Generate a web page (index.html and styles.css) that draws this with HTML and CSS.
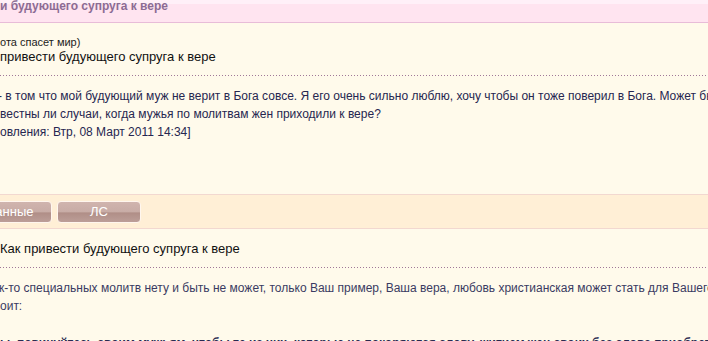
FILE: index.html
```html
<!DOCTYPE html>
<html>
	<head>
		<meta charset="UTF-8">
		<meta name="viewport" content="width=device-width, initial-scale=1.0" />
		<title>Как привести будующего супруга к вере</title>
		<link rel="stylesheet" href="styles.css">
	</head>
	<body>
		<div class="topic-bar">
			<div class="topic-title">и будующего супруга к вере</div>
		</div>

		<div class="post">
			<div class="post-author">ота спасет мир)</div>
			<div class="post-subject">привести будующего супруга к вере</div>
			<div class="dots"></div>
			<div class="post-body">
				<div class="first-line">- в том что мой будующий муж не верит в Бога совсе. Я его очень сильно люблю, хочу чтобы он тоже поверил в Бога. Может быть кто знает</div>
				<div>вестны ли случаи, когда мужья по молитвам жен приходили к вере?</div>
				<div>овления: Втр, 08 Март 2011 14:34]</div>
			</div>
		</div>

		<div class="post-tools">
			<div class="tool-list">
				<a class="tool-btn" href="#">Данные</a>
				<a class="tool-btn" href="#">ЛС</a>
			</div>
		</div>

		<div class="post post-reply">
			<div class="post-subject">Как привести будующего супруга к вере</div>
			<div class="dots"></div>
			<div class="post-body">
				<div class="first-line">к-то специальных молитв нету и быть не может, только Ваш пример, Ваша вера, любовь христианская может стать для Вашего мужа</div>
				<div>оит:</div>
				<div class="quote">ы, повинуйтесь своим мужьям, чтобы те из них, которые не покоряются слову, житием жен своих без слова приобретаемы были</div>
			</div>
		</div>
	</body>
</html>
```

FILE: styles.css
```css
body{margin:0;padding:0;background:#fffaeb;font-family:"Liberation Sans",Arial,sans-serif;overflow:hidden;}
a{text-decoration:none;}

.topic-bar{height:18px;background:#ffe4f0;border-top:4px solid #fff0f8;border-bottom:1px solid #e8bcd8;overflow:visible;}
.topic-title{margin-top:-5px;font-size:12px;line-height:14px;font-weight:bold;color:#8c6c94;white-space:nowrap;}

.post{padding-top:14px;white-space:nowrap;}
.post-author{font-size:11px;line-height:11px;color:#222;}
.post-subject{margin-top:2px;font-size:13px;line-height:14px;color:#111;}
.dots{height:1px;margin-top:11px;background:repeating-linear-gradient(to right,#a07898 0 1px,transparent 1px 3px);}
.post-body{margin-top:11px;font-size:12px;line-height:18px;color:#262650;}
.first-line{text-indent:-2px;}

.post-tools{margin-top:53px;height:33px;background:#ffefd6;border-top:1px solid #f2d8d0;border-bottom:1px solid #f2d8d0;}
.tool-list{display:flex;gap:7px;margin-left:-32px;padding-top:6px;}
.tool-btn{display:block;box-sizing:border-box;width:84px;height:22px;border:1px solid #fff6ee;border-radius:4px;background:linear-gradient(#d0b4ae,#c8aca6 50%,#b08e87 54%,#bc9e98 100%);color:#fff;font-size:13px;line-height:20px;text-align:center;}
.tool-btn + .tool-btn{margin-left:-2px;}

.post-reply{padding-top:13px;}
.post-reply .post-subject{margin-top:0;}
.post-reply .dots{margin-top:11px;}
.post-reply .post-body{margin-top:11px;color:#3a3a62;}
.post-reply .first-line{text-indent:-1px;}
.quote{margin-top:19px;font-weight:bold;color:#2a2a50;}
```
